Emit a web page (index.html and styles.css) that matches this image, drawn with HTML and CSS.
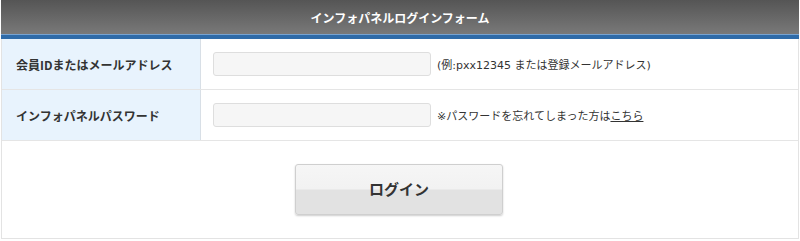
FILE: index.html
```html
<!DOCTYPE html>
<html lang="ja">
<head>
<meta charset="utf-8">
<link rel="stylesheet" href="styles.css">
</head>
<body>
<div class="panel">
  <div class="panel-head">インフォパネルログインフォーム</div>
  <div class="row">
    <div class="label">会員IDまたはメールアドレス</div>
    <div class="field"><span class="input"></span><span class="hint">(例:pxx12345 または登録メールアドレス)</span></div>
  </div>
  <div class="row">
    <div class="label">インフォパネルパスワード</div>
    <div class="field"><span class="input"></span><span class="hint">※パスワードを忘れてしまった方は<a class="link">こちら</a></span></div>
  </div>
  <div class="actions">
    <button class="btn">ログイン</button>
  </div>
</div>
</body>
</html>
```
FILE: styles.css
```css
* { box-sizing: border-box; }
html, body { margin: 0; padding: 0; background: #fff; }
body { font-family: "Noto Sans CJK JP", "Noto Sans", sans-serif; color: #333; }
.panel {
  width: 798px;
  margin: 0 0 0 1px;
  border-left: 1px solid #e3e3e3;
  border-right: 1px solid #e3e3e3;
  border-bottom: 1px solid #e3e3e3;
}
.panel-head {
  height: 39px;
  background: linear-gradient(#555 0%, #7a7a7a 100%);
  border-bottom: 4px solid #2f6ba8;
  box-shadow: inset 0 -1px 0 #78a3d0;
  color: #fff;
  font-weight: bold;
  font-size: 12px;
  text-align: center;
  line-height: 36px;
  margin: 0 -1px;
}
.row {
  display: flex;
  height: 51px;
  border-bottom: 1px solid #e5e5e5;
}
.label {
  width: 199px;
  background: #e8f3fd;
  border-right: 1px solid #d8dfe6;
  font-size: 12px;
  font-weight: bold;
  color: #333;
  padding-left: 14px;
  display: flex;
  align-items: center;
}
.field {
  flex: 1;
  display: flex;
  align-items: center;
  padding-left: 12px;
}
.input {
  width: 218px;
  height: 24px;
  background: #f6f6f6;
  border: 1px solid #dedede;
  border-radius: 3px;
}
.hint {
  margin-left: 6px;
  font-family: "DejaVu Sans", "Noto Sans CJK JP", sans-serif;
  font-size: 11px;
  color: #333;
}
.link { color: #333; text-decoration: underline; }
.actions {
  height: 97px;
  display: flex;
  justify-content: center;
  align-items: center;
  padding-right: 2px;
}
.btn {
  width: 208px;
  height: 51px;
  border: 1px solid #cfcfcf;
  border-radius: 3px;
  background: linear-gradient(#f6f6f6 0%, #f2f2f2 48%, #e2e2e2 52%, #e2e2e2 100%);
  box-shadow: 0 1px 2px rgba(0,0,0,0.2);
  font-family: "Noto Sans CJK JP", sans-serif;
  font-weight: bold;
  font-size: 15px;
  line-height: 1;
  padding: 0 0 3px;
  color: #333;
}
```
